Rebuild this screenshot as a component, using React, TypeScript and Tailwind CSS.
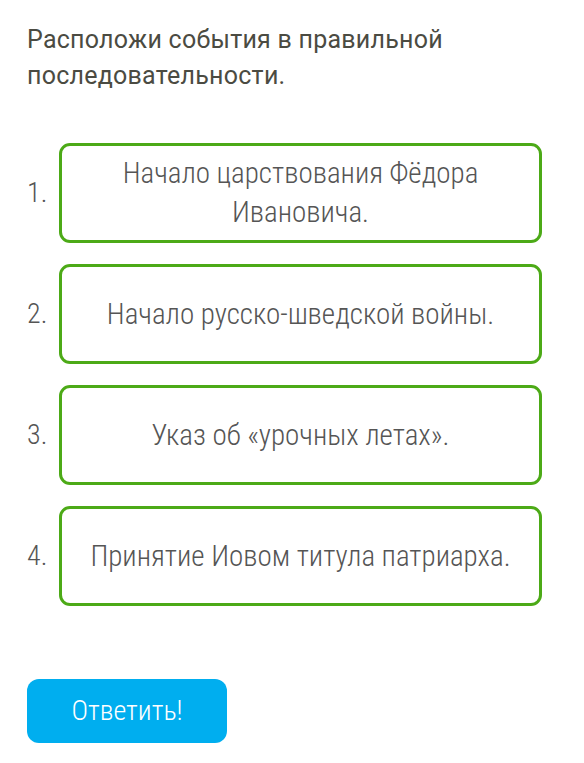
const items = [
  "Начало царствования Фёдора Ивановича.",
  "Начало русско-шведской войны.",
  "Указ об «урочных летах».",
  "Принятие Иовом титула патриарха.",
];

export default function App() {
  return (
    <div className="min-h-[763px] bg-white font-['Roboto',_sans-serif] [font-stretch:75%]">
      <div className="pl-[27px] pr-[42px] pt-[22px]">
        <h1 className="text-[25px] leading-[36px] font-normal tracking-[0.25px] text-[#4b4b42] [font-stretch:90%]">
          Расположи события в правильной последовательности.
        </h1>

        <div className="mt-[49px] flex flex-col gap-[21px]">
          {items.map((text, i) => (
            <div key={i} className="flex items-center">
              <span className="w-[32px] shrink-0 text-[28px] font-light text-[#555]">{i + 1}.</span>
              <div className="flex h-[100px] flex-1 items-center justify-center rounded-[11px] border-[3px] border-[#4caa17] px-4 text-center text-[29px] leading-[39px] font-light text-[#555]">
                {text}
              </div>
            </div>
          ))}
        </div>

        <button className="mt-[73px] h-[64px] w-[200px] rounded-[12px] bg-[#00aeef] text-[28px] font-light text-white">
          Ответить!
        </button>
      </div>
    </div>
  );
}
